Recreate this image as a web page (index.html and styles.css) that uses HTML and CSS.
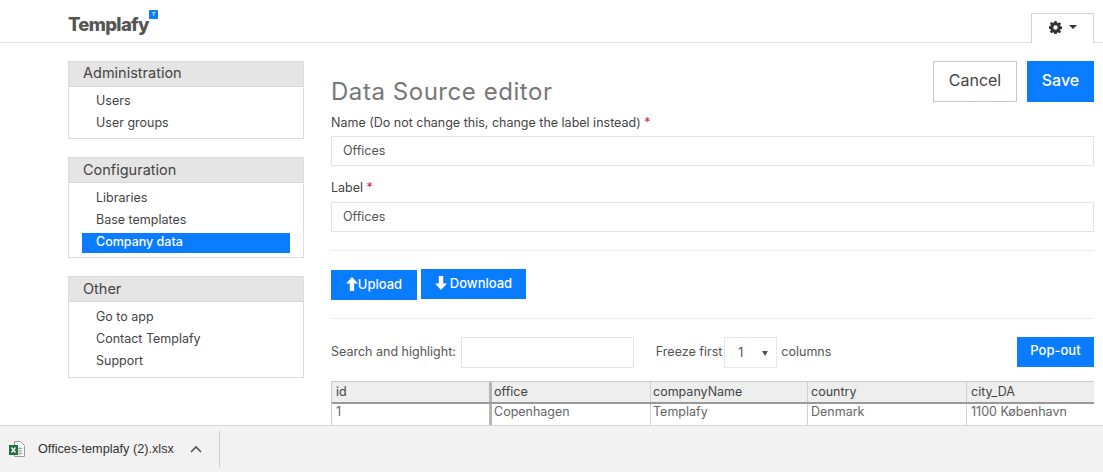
FILE: index.html
```html
<!DOCTYPE html>
<html lang="en">
<head>
    <meta charset="UTF-8">
    <title>Data Source editor</title>
    <link rel="stylesheet" href="styles.css">
</head>
<body>
    <div class="page">
        <header class="topbar">
            <div class="logo">Templafy<span class="logo-badge">T</span></div>
            <button class="settings">
                <svg class="gear" viewBox="0 0 16 16" width="13" height="13"><path fill="#333" fill-rule="evenodd" d="M6.600 0h2.800l.4 2.200 1.200.5 1.900-1.300 2 2-1.300 1.900.5 1.200 2.200.4v2.800l-2.200.4-.5 1.200 1.300 1.900-2 2-1.900-1.300-1.200.5-.4 2.200H6.600l-.4-2.200-1.200-.5-1.900 1.300-2-2 1.300-1.900-.5-1.200L-.3 9.400V6.600l2.200-.4.5-1.200-1.300-1.900 2-2L5 2.400l1.200-.5zM8 5.300a2.700 2.700 0 1 0 0 5.400 2.700 2.700 0 0 0 0-5.400z"/></svg>
                <span class="caret"></span>
            </button>
        </header>

        <div class="content">
            <!-- left menu -->
            <nav class="sidebar">
                <div class="menu-box menu-box-first">
                    <div class="menu-title">Administration</div>
                    <ul class="menu-list">
                        <li>Users</li>
                        <li>User groups</li>
                    </ul>
                </div>
                <div class="menu-box menu-box-config">
                    <div class="menu-title">Configuration</div>
                    <ul class="menu-list">
                        <li>Libraries</li>
                        <li>Base templates</li>
                        <li class="active">Company data</li>
                    </ul>
                </div>
                <div class="menu-box menu-box-other">
                    <div class="menu-title">Other</div>
                    <ul class="menu-list">
                        <li>Go to app</li>
                        <li>Contact Templafy</li>
                        <li>Support</li>
                    </ul>
                </div>
            </nav>

            <!-- editor -->
            <main class="editor">
                <div class="editor-head">
                    <h1>Data Source editor</h1>
                    <div class="editor-actions">
                        <button class="btn-cancel">Cancel</button>
                        <button class="btn-save">Save</button>
                    </div>
                </div>

                <label class="field-label">Name (Do not change this, change the label instead) <span class="req">*</span></label>
                <input class="field-input" type="text" value="Offices">
                <label class="field-label label-second">Label <span class="req">*</span></label>
                <input class="field-input input-second" type="text" value="Offices">

                <hr class="rule rule-first">

                <div class="file-actions">
                    <button class="btn-blue btn-upload">
                        <svg viewBox="0 0 12 14" width="12" height="14"><path fill="#fff" d="M6 0l6 6.500H8.200V14H3.800V6.500H0z"/></svg>Upload
                    </button>
                    <button class="btn-blue btn-download">
                        <svg viewBox="0 0 12 14" width="12" height="14"><path fill="#fff" d="M6 14L0 7.500h3.800V0h4.400v7.500H12z"/></svg>Download
                    </button>
                </div>

                <hr class="rule rule-second">

                <div class="table-tools">
                    <span class="tool-text">Search and highlight:</span>
                    <input class="search-input" type="text">
                    <span class="tool-text freeze-label">Freeze first</span>
                    <div class="freeze-select">1<span class="select-arrow"></span></div>
                    <span class="tool-text">columns</span>
                    <button class="btn-blue btn-popout">Pop-out</button>
                </div>

                <div class="sheet">
                    <div class="sheet-row sheet-head">
                        <div class="cell frozen">id</div>
                        <div class="cell">office</div>
                        <div class="cell">companyName</div>
                        <div class="cell">country</div>
                        <div class="cell">city_DA</div>
                    </div>
                    <div class="sheet-row">
                        <div class="cell frozen">1</div>
                        <div class="cell">Copenhagen</div>
                        <div class="cell">Templafy</div>
                        <div class="cell">Denmark</div>
                        <div class="cell">1100 København</div>
                    </div>
                </div>
            </main>
        </div>

        <!-- browser download bar -->
        <footer class="download-bar">
            <svg class="xls-icon" viewBox="0 0 16 17" width="16" height="17">
                <path fill="#fff" stroke="#9a9a9a" d="M5.500.5h6l4 4v11h-10z"/>
                <path fill="none" stroke="#a9a9a9" d="M9 7.500h4.500M9 10h4.500M9 12.500h4.500M11 6v8"/>
                <rect x="0" y="4" width="9" height="10" fill="#1e7145"/>
                <path fill="none" stroke="#fff" stroke-width="1.300" d="M2.500 6.500l4 5M6.500 6.500l-4 5"/>
            </svg>
            <span class="file-name">Offices-templafy (2).xlsx</span>
            <svg class="chevron" viewBox="0 0 12 8" width="12" height="8"><path fill="none" stroke="#555" stroke-width="1.600" d="M1 7l5-5 5 5"/></svg>
            <span class="bar-divider"></span>
        </footer>
    </div>
</body>
</html>
```

FILE: styles.css
```css
* {
    box-sizing: border-box;
}
html, body {
    margin: 0;
    height: 100%;
}
body {
    font-family: 'Inter', 'Liberation Sans', sans-serif;
    font-size: 13px;
    color: #444;
    background: #fff;
}
.page {
    height: 472px;
    display: flex;
    flex-direction: column;
    overflow: hidden;
}
button {
    font-family: inherit;
    cursor: pointer;
}

/* top bar */
.topbar {
    height: 43px;
    flex: none;
    border-bottom: 1px solid #e2e2e2;
    padding: 13px 9px 0 68px;
    display: flex;
    justify-content: space-between;
    align-items: flex-start;
}
.logo {
    position: relative;
    font-family: 'Inter', sans-serif;
    font-size: 18.5px;
    font-weight: 800;
    line-height: 22px;
    letter-spacing: -0.7px;
    color: #555;
}
.logo-badge {
    position: absolute;
    top: -3px;
    left: 81px;
    width: 9px;
    height: 9px;
    border-radius: 1px;
    background: #0a7cff;
    color: #cfe4ff;
    font-family: 'Liberation Sans', sans-serif;
    font-size: 6px;
    font-weight: bold;
    line-height: 9px;
    letter-spacing: 0;
    text-align: center;
}
.settings {
    width: 63px;
    height: 30px;
    border: 1px solid #d4d4d4;
    border-bottom: none;
    background: #fff;
    display: flex;
    align-items: center;
    justify-content: center;
    gap: 7px;
    padding: 0 0 3px;
}
.caret {
    width: 0;
    height: 0;
    border-left: 4px solid transparent;
    border-right: 4px solid transparent;
    border-top: 4px solid #333;
}

/* layout */
.content {
    flex: 1;
    min-height: 0;
    overflow: hidden;
    display: flex;
    padding: 18px 9px 0 68px;
    gap: 27px;
}
.sidebar {
    width: 236px;
    flex: none;
    display: flex;
    flex-direction: column;
    gap: 18px;
}
.menu-box {
    border: 1px solid #dcdcdc;
}
.menu-title {
    height: 25px;
    margin-bottom: 4px;
    padding-left: 14px;
    background: #e5e5e5;
    border-bottom: 1px solid #d8d8d8;
    font-size: 14.5px;
    line-height: 23px;
    color: #444;
}
.menu-box-first {
    padding-bottom: 4px;
}
.menu-box-first .menu-title {
    margin-bottom: 3px;
    line-height: 21px;
}
.menu-box-config {
    padding-bottom: 4px;
}
.menu-box-other {
    padding-bottom: 5px;
}
.menu-list {
    list-style: none;
    margin: 0;
    padding: 0 13px;
}
.menu-list li {
    height: 22px;
    padding-left: 14px;
    line-height: 22px;
    font-size: 12.5px;
    color: #444;
}
.menu-list li.active {
    height: 20px;
    line-height: 18px;
    margin-top: 2px;
    background: #0a7cff;
    color: #fff;
    font-weight: 500;
}

/* editor */
.editor {
    flex: 1;
    min-width: 0;
}
.editor-head {
    display: flex;
    justify-content: space-between;
    height: 51px;
}
h1 {
    margin: 16px 0 0;
    font-size: 24px;
    font-weight: 400;
    line-height: 30px;
    letter-spacing: 0.55px;
    color: #777;
}
.editor-actions {
    display: flex;
    gap: 10px;
    height: 41px;
}
.btn-cancel, .btn-save {
    height: 41px;
    font-size: 16px;
    padding: 0 0 4px;
}
.btn-cancel {
    width: 84px;
    background: #fff;
    border: 1px solid #c8c8c8;
    color: #444;
}
.btn-save {
    width: 67px;
    background: #0a7cff;
    border: none;
    color: #fff;
    font-weight: 500;
}
.field-label {
    display: block;
    height: 21px;
    line-height: 21px;
    font-size: 12.5px;
    color: #444;
}
.label-second {
    margin-top: 11px;
}
.req {
    color: #d9262c;
}
.field-input {
    display: block;
    width: 100%;
    height: 30px;
    margin-top: 3px;
    padding: 0 11px 2px;
    border: 1px solid #e3e3e3;
    font-family: inherit;
    font-size: 12.5px;
    color: #555;
}
.input-second {
    margin-top: 4px;
}
.rule {
    border: none;
    border-top: 1px solid #ebebeb;
    margin: 0;
}
.rule-first {
    margin-top: 18px;
}
.file-actions {
    display: flex;
    gap: 4px;
    align-items: flex-start;
    margin-top: 18px;
}
.btn-blue {
    background: #0a7cff;
    border: none;
    color: #fff;
    font-size: 13px;
    font-weight: 500;
    padding: 0 0 3px;
    display: flex;
    align-items: center;
    justify-content: center;
}
.btn-upload {
    width: 86px;
    height: 30px;
    margin-top: 1px;
}
.btn-download {
    width: 105px;
    height: 30px;
    gap: 3px;
}
.rule-second {
    margin-top: 18px;
}
.table-tools {
    display: flex;
    align-items: center;
    height: 31px;
    margin-top: 18px;
    font-size: 12.5px;
    color: #555;
}
.tool-text {
    margin-bottom: 2px;
}
.search-input {
    width: 173px;
    height: 31px;
    margin-left: 5px;
    border: 1px solid #e3e3e3;
}
.freeze-label {
    margin-left: 22px;
}
.freeze-select {
    position: relative;
    width: 53px;
    height: 31px;
    margin: 0 4px 0 2px;
    padding-left: 13px;
    border: 1px solid #e8e8e8;
    line-height: 29px;
}
.select-arrow {
    position: absolute;
    right: 8px;
    top: 13px;
    width: 0;
    height: 0;
    border-left: 3px solid transparent;
    border-right: 3px solid transparent;
    border-top: 5px solid #555;
}
.btn-popout {
    width: 77px;
    height: 30px;
    margin-left: auto;
    margin-top: -2px;
}

/* sheet */
.sheet {
    margin-top: 13px;
    border-left: 1px solid #ccc;
    font-size: 12.5px;
    color: #666;
}
.sheet-row {
    display: grid;
    grid-template-columns: 160px 159px 157px 159px 127px;
    height: 24px;
}
.sheet-head {
    height: 23px;
    background: #eee;
    border-top: 1px solid #ccc;
    border-bottom: 2px solid #999;
    color: #444;
}
.cell {
    padding-left: 2px;
    border-right: 1px solid #d0d0d0;
    line-height: 15px;
    white-space: nowrap;
    overflow: hidden;
}
.cell:nth-child(n+4) {
    padding-left: 3px;
}
.cell:last-child {
    padding-left: 4px;
    border-right: none;
}
.sheet-head .cell {
    line-height: 19px;
}
.frozen {
    padding-left: 4px;
    border-right: 3px solid #b5b5b5;
}

/* download bar */
.download-bar {
    height: 47px;
    flex: none;
    background: #f2f2f2;
    border-top: 1px solid #d6d6d6;
    display: flex;
    align-items: center;
    padding-left: 9px;
    font-family: 'Liberation Sans', sans-serif;
    font-size: 12.7px;
    color: #333;
}
.file-name {
    margin-left: 13px;
}
.chevron {
    margin-left: 16px;
}
.bar-divider {
    width: 1px;
    height: 36px;
    margin-left: 17px;
    background: #ccc;
}
```
